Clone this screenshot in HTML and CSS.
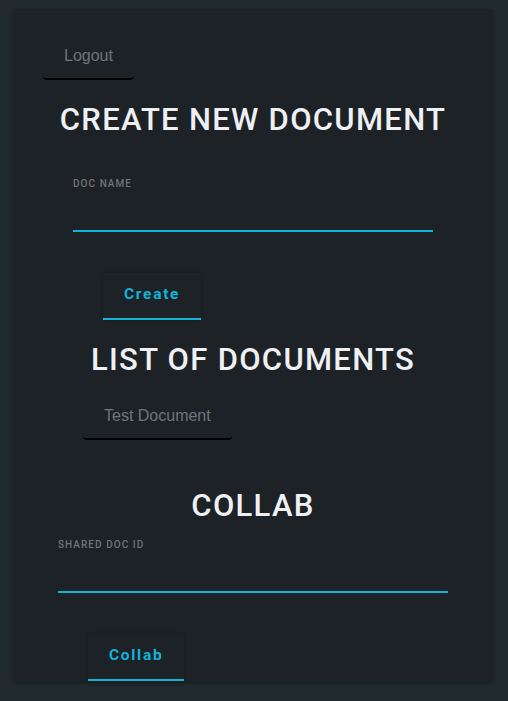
FILE: index.html
```html
<!DOCTYPE html>
<html>
<head>
<meta charset="utf-8">
<link rel="stylesheet" href="styles.css">
</head>
<body>
<div class="card">
  <button class="btn btn-plain btn-logout">Logout</button>
  <h1 class="title title-create">CREATE NEW DOCUMENT</h1>
  <form class="form form-create">
    <label class="label">DOC NAME</label>
    <div class="field"></div>
    <button type="button" class="btn btn-accent">Create</button>
  </form>
  <h1 class="title title-list">LIST OF DOCUMENTS</h1>
  <div class="doclist">
    <button class="btn btn-plain">Test Document</button>
  </div>
  <h1 class="title title-collab">COLLAB</h1>
  <form class="form form-collab">
    <label class="label">SHARED DOC ID</label>
    <div class="field"></div>
    <button type="button" class="btn btn-accent">Collab</button>
  </form>
</div>
</body>
</html>
```

FILE: styles.css
```css
html, body {
  margin: 0;
  padding: 0;
}
body {
  background: #222b30;
  height: 701px;
  overflow: hidden;
  font-family: Roboto, "Liberation Sans", sans-serif;
}
.card {
  width: 480px;
  margin: 9px 0 0 13px;
  padding: 24px 0 0;
  background: #1c2226;
  box-shadow: 0 2px 6px rgba(0, 0, 0, 0.35);
  box-sizing: border-box;
}
.btn {
  display: block;
  height: 47px;
  padding: 0 21px;
  border: none;
  border-bottom: 2px solid transparent;
  background: #1c2226;
  cursor: pointer;
}
.btn-plain {
  font-family: "Liberation Sans", Arial, sans-serif;
  font-size: 16px;
  color: #6f757a;
  border-bottom-color: #000;
  border-radius: 4px;
}
.btn-logout {
  margin-left: 30px;
}
.btn-accent {
  margin: 41px 0 0 30px;
  padding-bottom: 3px;
  font-family: Roboto, sans-serif;
  font-weight: 700;
  font-size: 15.5px;
  letter-spacing: 1.7px;
  color: #11b3d9;
  border-bottom-color: #11b3d9;
  box-shadow: 0 0 3px rgba(0, 0, 0, 0.35);
}
.title {
  margin: 0;
  font-family: Roboto, sans-serif;
  font-weight: 500;
  font-size: 31px;
  line-height: 36px;
  letter-spacing: 1.3px;
  color: #eef0f4;
  text-align: center;
}
.title-create { margin-top: 22px; }
.title-list { margin-top: 22px; }
.title-collab { margin-top: 48px; }
.form {
  margin: 0 auto;
}
.form-create {
  width: 360px;
  margin-top: 40px;
}
.form-collab {
  width: 390px;
  margin-top: 15px;
}
.label {
  display: block;
  font-size: 10px;
  line-height: 12px;
  font-weight: 500;
  letter-spacing: 1.05px;
  color: #707478;
}
.field {
  height: 40px;
  border-bottom: 2px solid #11b3d9;
}
.doclist {
  margin: 15px 0 0 70px;
}
```
